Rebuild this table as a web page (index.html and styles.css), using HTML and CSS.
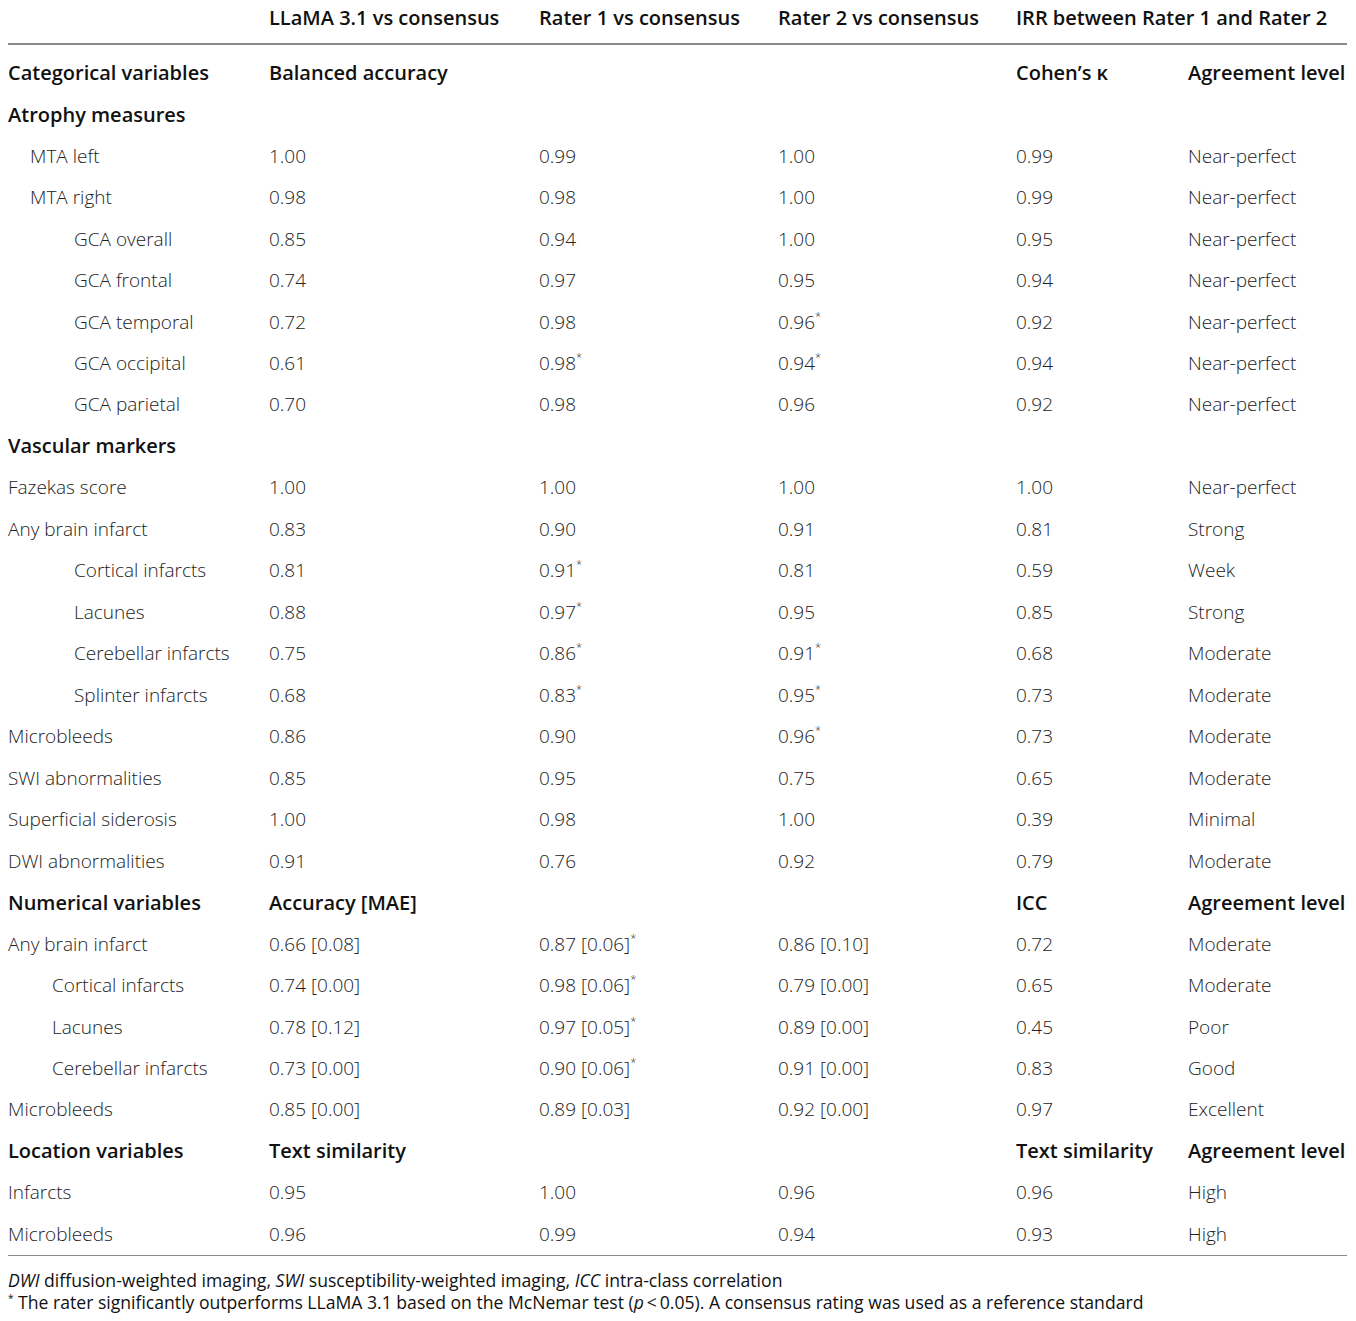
FILE: index.html
```html
<!DOCTYPE html>
<html lang="en">
<head>
    <meta charset="UTF-8">
    <title>Agreement table</title>
    <link rel="stylesheet" href="styles.css">
</head>
<body>
    <table class="results">
        <colgroup>
            <col class="col-name">
            <col class="col-llm">
            <col class="col-r1">
            <col class="col-r2">
            <col class="col-kappa">
            <col class="col-level">
        </colgroup>
        <thead>
            <tr>
                <th></th>
                <th>LLaMA 3.1 vs consensus</th>
                <th>Rater 1 vs consensus</th>
                <th>Rater 2 vs consensus</th>
                <th colspan="2">IRR between Rater 1 and Rater 2</th>
            </tr>
        </thead>
        <tbody>
            <tr class="section first">
                <td>Categorical variables</td><td>Balanced accuracy</td><td></td><td></td><td>Cohen’s κ</td><td>Agreement level</td>
            </tr>
            <tr class="section">
                <td>Atrophy measures</td><td></td><td></td><td></td><td></td><td></td>
            </tr>
            <tr><td class="ind-1">MTA left</td><td>1.00</td><td>0.99</td><td>1.00</td><td>0.99</td><td>Near-perfect</td></tr>
            <tr><td class="ind-1">MTA right</td><td>0.98</td><td>0.98</td><td>1.00</td><td>0.99</td><td>Near-perfect</td></tr>
            <tr><td class="ind-3">GCA overall</td><td>0.85</td><td>0.94</td><td>1.00</td><td>0.95</td><td>Near-perfect</td></tr>
            <tr><td class="ind-3">GCA frontal</td><td>0.74</td><td>0.97</td><td>0.95</td><td>0.94</td><td>Near-perfect</td></tr>
            <tr><td class="ind-3">GCA temporal</td><td>0.72</td><td>0.98</td><td>0.96<sup>*</sup></td><td>0.92</td><td>Near-perfect</td></tr>
            <tr><td class="ind-3">GCA occipital</td><td>0.61</td><td>0.98<sup>*</sup></td><td>0.94<sup>*</sup></td><td>0.94</td><td>Near-perfect</td></tr>
            <tr><td class="ind-3">GCA parietal</td><td>0.70</td><td>0.98</td><td>0.96</td><td>0.92</td><td>Near-perfect</td></tr>
            <tr class="section">
                <td>Vascular markers</td><td></td><td></td><td></td><td></td><td></td>
            </tr>
            <tr><td>Fazekas score</td><td>1.00</td><td>1.00</td><td>1.00</td><td>1.00</td><td>Near-perfect</td></tr>
            <tr><td>Any brain infarct</td><td>0.83</td><td>0.90</td><td>0.91</td><td>0.81</td><td>Strong</td></tr>
            <tr><td class="ind-3">Cortical infarcts</td><td>0.81</td><td>0.91<sup>*</sup></td><td>0.81</td><td>0.59</td><td>Week</td></tr>
            <tr><td class="ind-3">Lacunes</td><td>0.88</td><td>0.97<sup>*</sup></td><td>0.95</td><td>0.85</td><td>Strong</td></tr>
            <tr><td class="ind-3">Cerebellar infarcts</td><td>0.75</td><td>0.86<sup>*</sup></td><td>0.91<sup>*</sup></td><td>0.68</td><td>Moderate</td></tr>
            <tr><td class="ind-3">Splinter infarcts</td><td>0.68</td><td>0.83<sup>*</sup></td><td>0.95<sup>*</sup></td><td>0.73</td><td>Moderate</td></tr>
            <tr><td>Microbleeds</td><td>0.86</td><td>0.90</td><td>0.96<sup>*</sup></td><td>0.73</td><td>Moderate</td></tr>
            <tr><td>SWI abnormalities</td><td>0.85</td><td>0.95</td><td>0.75</td><td>0.65</td><td>Moderate</td></tr>
            <tr><td>Superficial siderosis</td><td>1.00</td><td>0.98</td><td>1.00</td><td>0.39</td><td>Minimal</td></tr>
            <tr><td>DWI abnormalities</td><td>0.91</td><td>0.76</td><td>0.92</td><td>0.79</td><td>Moderate</td></tr>
            <tr class="section">
                <td>Numerical variables</td><td>Accuracy [MAE]</td><td></td><td></td><td>ICC</td><td>Agreement level</td>
            </tr>
            <tr><td>Any brain infarct</td><td>0.66 [0.08]</td><td>0.87 [0.06]<sup>*</sup></td><td>0.86 [0.10]</td><td>0.72</td><td>Moderate</td></tr>
            <tr><td class="ind-2">Cortical infarcts</td><td>0.74 [0.00]</td><td>0.98 [0.06]<sup>*</sup></td><td>0.79 [0.00]</td><td>0.65</td><td>Moderate</td></tr>
            <tr><td class="ind-2">Lacunes</td><td>0.78 [0.12]</td><td>0.97 [0.05]<sup>*</sup></td><td>0.89 [0.00]</td><td>0.45</td><td>Poor</td></tr>
            <tr><td class="ind-2">Cerebellar infarcts</td><td>0.73 [0.00]</td><td>0.90 [0.06]<sup>*</sup></td><td>0.91 [0.00]</td><td>0.83</td><td>Good</td></tr>
            <tr><td>Microbleeds</td><td>0.85 [0.00]</td><td>0.89 [0.03]</td><td>0.92 [0.00]</td><td>0.97</td><td>Excellent</td></tr>
            <tr class="section">
                <td>Location variables</td><td>Text similarity</td><td></td><td></td><td>Text similarity</td><td>Agreement level</td>
            </tr>
            <tr><td>Infarcts</td><td>0.95</td><td>1.00</td><td>0.96</td><td>0.96</td><td>High</td></tr>
            <tr class="last"><td>Microbleeds</td><td>0.96</td><td>0.99</td><td>0.94</td><td>0.93</td><td>High</td></tr>
        </tbody>
    </table>
    <div class="notes">
        <p><i>DWI</i> diffusion-weighted imaging, <i>SWI</i> susceptibility-weighted imaging, <i>ICC</i> intra-class correlation</p>
        <p><sup>*</sup> The rater significantly outperforms LLaMA 3.1 based on the McNemar test (<i>p</i>&thinsp;&lt;&thinsp;0.05). A consensus rating was used as a reference standard</p>
    </div>
</body>
</html>
```

FILE: styles.css
```css
body {
    margin: 0;
    padding: 0 9px 0 8px;
    background-color: #ffffff;
    font-family: "Open Sans", "Liberation Sans", sans-serif;
    color: #222222;
}

.results {
    width: 100%;
    table-layout: fixed;
    border-collapse: collapse;
    font-size: 19px;
}

.col-name { width: 261px; }
.col-llm { width: 270px; }
.col-r1 { width: 239px; }
.col-r2 { width: 238px; }
.col-kappa { width: 172px; }
.col-level { width: auto; }

.results th {
    height: 34px;
    padding: 0 0 9px 0;
    text-align: left;
    vertical-align: middle;
    font-size: 20px;
    font-weight: 600;
    color: #111111;
    border-bottom: 2px solid #8a8a8a;
    white-space: nowrap;
}

.results td {
    height: 41.48px;
    padding: 0;
    vertical-align: middle;
    white-space: nowrap;
    font-weight: 300;
    color: #222222;
}

.results .first td {
    padding-top: 7px;
}

.results .section td {
    font-size: 20px;
    font-weight: 600;
    color: #111111;
}

.results .last td {
    border-bottom: 1.5px solid #8a8a8a;
}

.results td.ind-1 { padding-left: 22px; }
.results td.ind-2 { padding-left: 44px; }
.results td.ind-3 { padding-left: 66px; }

sup {
    font-size: 11px;
    line-height: 0;
    vertical-align: 9px;
}

.notes {
    padding-top: 13px;
    font-size: 17.6px;
    font-weight: 400;
    color: #111111;
}

.notes p {
    margin: 0;
    line-height: 22px;
    white-space: nowrap;
}

.notes sup {
    font-size: 10px;
    vertical-align: 7px;
}
```
